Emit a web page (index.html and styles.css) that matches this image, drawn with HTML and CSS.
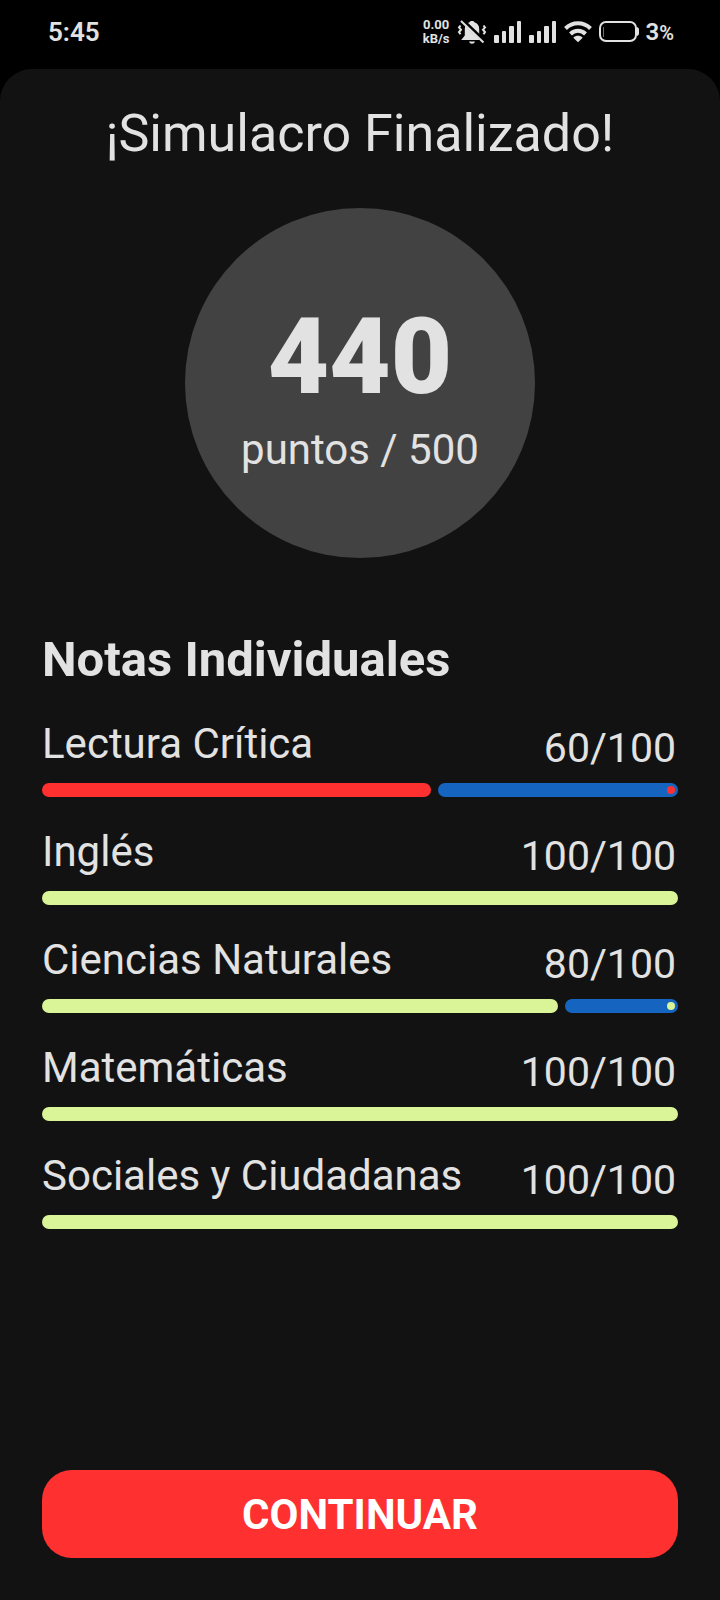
FILE: index.html
```
<!DOCTYPE html>
<html lang="es">
<head>
  <meta charset="UTF-8" />
  <meta name="viewport" content="width=device-width, initial-scale=1" />
  <title>Simulacro Finalizado</title>
  <link rel="stylesheet" href="styles.css">
</head>
<body>

  <header class="status-bar">
    <span class="clock">5:45</span>
    <div class="status-icons">
      <div class="net-speed"><span>0.00</span><span>kB/s</span></div>

      <!-- Campana silenciada -->
      <svg class="icon-bell" viewBox="0 0 30 26" width="30" height="26">
        <path class="fill" d="M15 2c1.300 0 2.200.5 2.500 1.200 3 .8 4.700 3.300 4.700 6.800v6.500l3.600 4.500H4.200l3.600-4.500V10c0-3.500 1.700-6 4.700-6.800C12.800 2.500 13.700 2 15 2z" />
        <path class="fill" d="M12 22.500h6c-.5 1.500-1.600 2.200-3 2.200s-2.500-.7-3-2.200z" />
        <path class="wave" d="M3.500 6.500l-1.500 2 2 2.200-2 2.300 1.500 2.300M26.500 6.500l1.500 2-2 2.200 2 2.300-1.500 2.300" />
        <path class="cut" d="M4.500 .5l24 23" />
        <path class="slash" d="M4 2l22.500 21.500" />
      </svg>

      <svg class="icon-signal" viewBox="0 0 28 22" width="28" height="22">
        <rect x="0" y="14" width="5" height="8" rx="1" />
        <rect x="8" y="10" width="4" height="12" rx="1" />
        <rect x="15" y="5" width="5" height="17" rx="1" />
        <rect x="23" y="0" width="4" height="22" rx="1" />
      </svg>
      <svg class="icon-signal" viewBox="0 0 28 22" width="28" height="22">
        <rect x="0" y="14" width="5" height="8" rx="1" />
        <rect x="8" y="10" width="4" height="12" rx="1" />
        <rect x="15" y="5" width="5" height="17" rx="1" />
        <rect x="23" y="0" width="4" height="22" rx="1" />
      </svg>

      <svg class="icon-wifi" viewBox="0 0 28 22" width="28" height="22">
        <path class="arc" d="M1.500 7.500C8.500 .6 19.500 .6 26.500 7.500" />
        <path class="arc" d="M6.500 13c4.200-4.200 10.800-4.200 15 0" />
        <path class="fill" d="M14 21.200l-4.700-4.500c2.600-2.500 6.800-2.500 9.400 0z" />
      </svg>

      <svg class="icon-battery" viewBox="0 0 40 22" width="40" height="22">
        <rect class="case" x="1" y="1" width="36" height="19" rx="6" />
        <path class="fill" d="M38 6c1.300.5 2 1.500 2 2.500v4c0 1-.7 2-2 2.500z" />
        <rect class="level" x="4" y="6" width="1" height="10" />
      </svg>
      <span class="battery-text">3<small>%</small></span>
    </div>
  </header>

  <main>
    <h1>¡Simulacro Finalizado!</h1>

    <div class="total">
      <span class="total-points">440</span>
      <span class="total-max">puntos / 500</span>
    </div>

    <section class="notas">
      <h2>Notas Individuales</h2>

      <div class="nota low">
        <div class="nota-text"><span>Lectura Crítica</span><span class="score">60/100</span></div>
        <div class="bar"><div class="bar-fill" style="--score: 60%"></div><div class="bar-rest"></div></div>
      </div>

      <div class="nota">
        <div class="nota-text"><span>Inglés</span><span class="score">100/100</span></div>
        <div class="bar"><div class="bar-fill full"></div></div>
      </div>

      <div class="nota">
        <div class="nota-text"><span>Ciencias Naturales</span><span class="score">80/100</span></div>
        <div class="bar"><div class="bar-fill" style="--score: 80%"></div><div class="bar-rest"></div></div>
      </div>

      <div class="nota">
        <div class="nota-text"><span>Matemáticas</span><span class="score">100/100</span></div>
        <div class="bar"><div class="bar-fill full"></div></div>
      </div>

      <div class="nota">
        <div class="nota-text"><span>Sociales y Ciudadanas</span><span class="score">100/100</span></div>
        <div class="bar"><div class="bar-fill full"></div></div>
      </div>
    </section>

    <button type="button">CONTINUAR</button>
  </main>

</body>
</html>
```
FILE: styles.css
```
:root {
  --fondo: #121212;
  --texto: #e2e2e2;
  --rojo: #ff3030;
  --verde: #daf498;
  --azul: #1565c0;
}

* {
  box-sizing: border-box;
}

body {
  margin: 0;
  min-height: 100vh;
  display: flex;
  flex-direction: column;
  background-color: #000;
  color: var(--texto);
  font-family: Roboto, "Liberation Sans", sans-serif;
}

/* Barra de estado */
.status-bar {
  display: flex;
  justify-content: space-between;
  align-items: center;
  height: 69px;
  padding: 0 46px 6px 48px;
}

.clock {
  font-size: 26px;
  font-weight: 600;
}

.status-icons {
  display: flex;
  align-items: center;
  gap: 7px;
}

.net-speed {
  display: flex;
  flex-direction: column;
  align-items: center;
  font-size: 13px;
  line-height: 14px;
  font-weight: 700;
}

.status-icons svg {
  display: block;
  fill: var(--texto);
}

.icon-bell .wave,
.icon-bell .cut,
.icon-bell .slash {
  fill: none;
  stroke: var(--texto);
  stroke-width: 2;
}

.icon-bell .cut {
  stroke: #000;
  stroke-width: 4;
}

.icon-wifi .arc {
  fill: none;
  stroke: var(--texto);
  stroke-width: 4;
}

.icon-battery .case {
  fill: none;
  stroke: var(--texto);
  stroke-width: 2;
}

.icon-battery .level {
  fill: var(--rojo);
}

.battery-text {
  font-size: 24px;
  font-weight: 600;
}

.battery-text small {
  font-size: 20px;
}

/* Resultado */
main {
  flex: 1;
  display: flex;
  flex-direction: column;
  padding: 33px 42px 42px;
  border-radius: 32px 32px 0 0;
  background-color: var(--fondo);
}

h1 {
  margin: 0;
  font-size: 52px;
  line-height: 64px;
  font-weight: 400;
  text-align: center;
}

.total {
  width: 350px;
  height: 350px;
  margin: 42px auto 69px;
  padding-top: 10px;
  display: flex;
  flex-direction: column;
  align-items: center;
  justify-content: center;
  gap: 7px;
  border-radius: 50%;
  background-color: #424242;
}

.total-points {
  font-size: 106px;
  line-height: 116px;
  font-weight: 900;
}

.total-max {
  font-size: 42px;
  line-height: 56px;
}

h2 {
  margin: 0;
  font-size: 49px;
  line-height: 66px;
  font-weight: 700;
}

/* Notas por materia */
.nota {
  padding: 20px 0 4px;
}

.nota-text {
  display: flex;
  justify-content: space-between;
  height: 70px;
  font-size: 42px;
  line-height: 62px;
}

.score {
  padding: 4px 2px 0 0;
  font-size: 41px;
}

.bar {
  display: flex;
  gap: 7px;
  height: 14px;
}

.bar-fill {
  width: calc(var(--score) + 7px);
  border-radius: 7px;
  background-color: var(--verde);
}

.bar-fill.full {
  width: 100%;
}

.bar-rest {
  flex: 1;
  display: flex;
  justify-content: flex-end;
  align-items: center;
  padding-right: 3px;
  border-radius: 7px;
  background-color: var(--azul);
}

.bar-rest::after {
  content: "";
  width: 8px;
  height: 8px;
  border-radius: 50%;
  background-color: var(--verde);
}

.low .bar-fill,
.low .bar-rest::after {
  background-color: var(--rojo);
}

button {
  margin-top: auto;
  height: 88px;
  border: none;
  border-radius: 30px;
  background-color: var(--rojo);
  color: white;
  font-family: inherit;
  font-size: 42px;
  font-weight: 700;
  cursor: pointer;
}
```
